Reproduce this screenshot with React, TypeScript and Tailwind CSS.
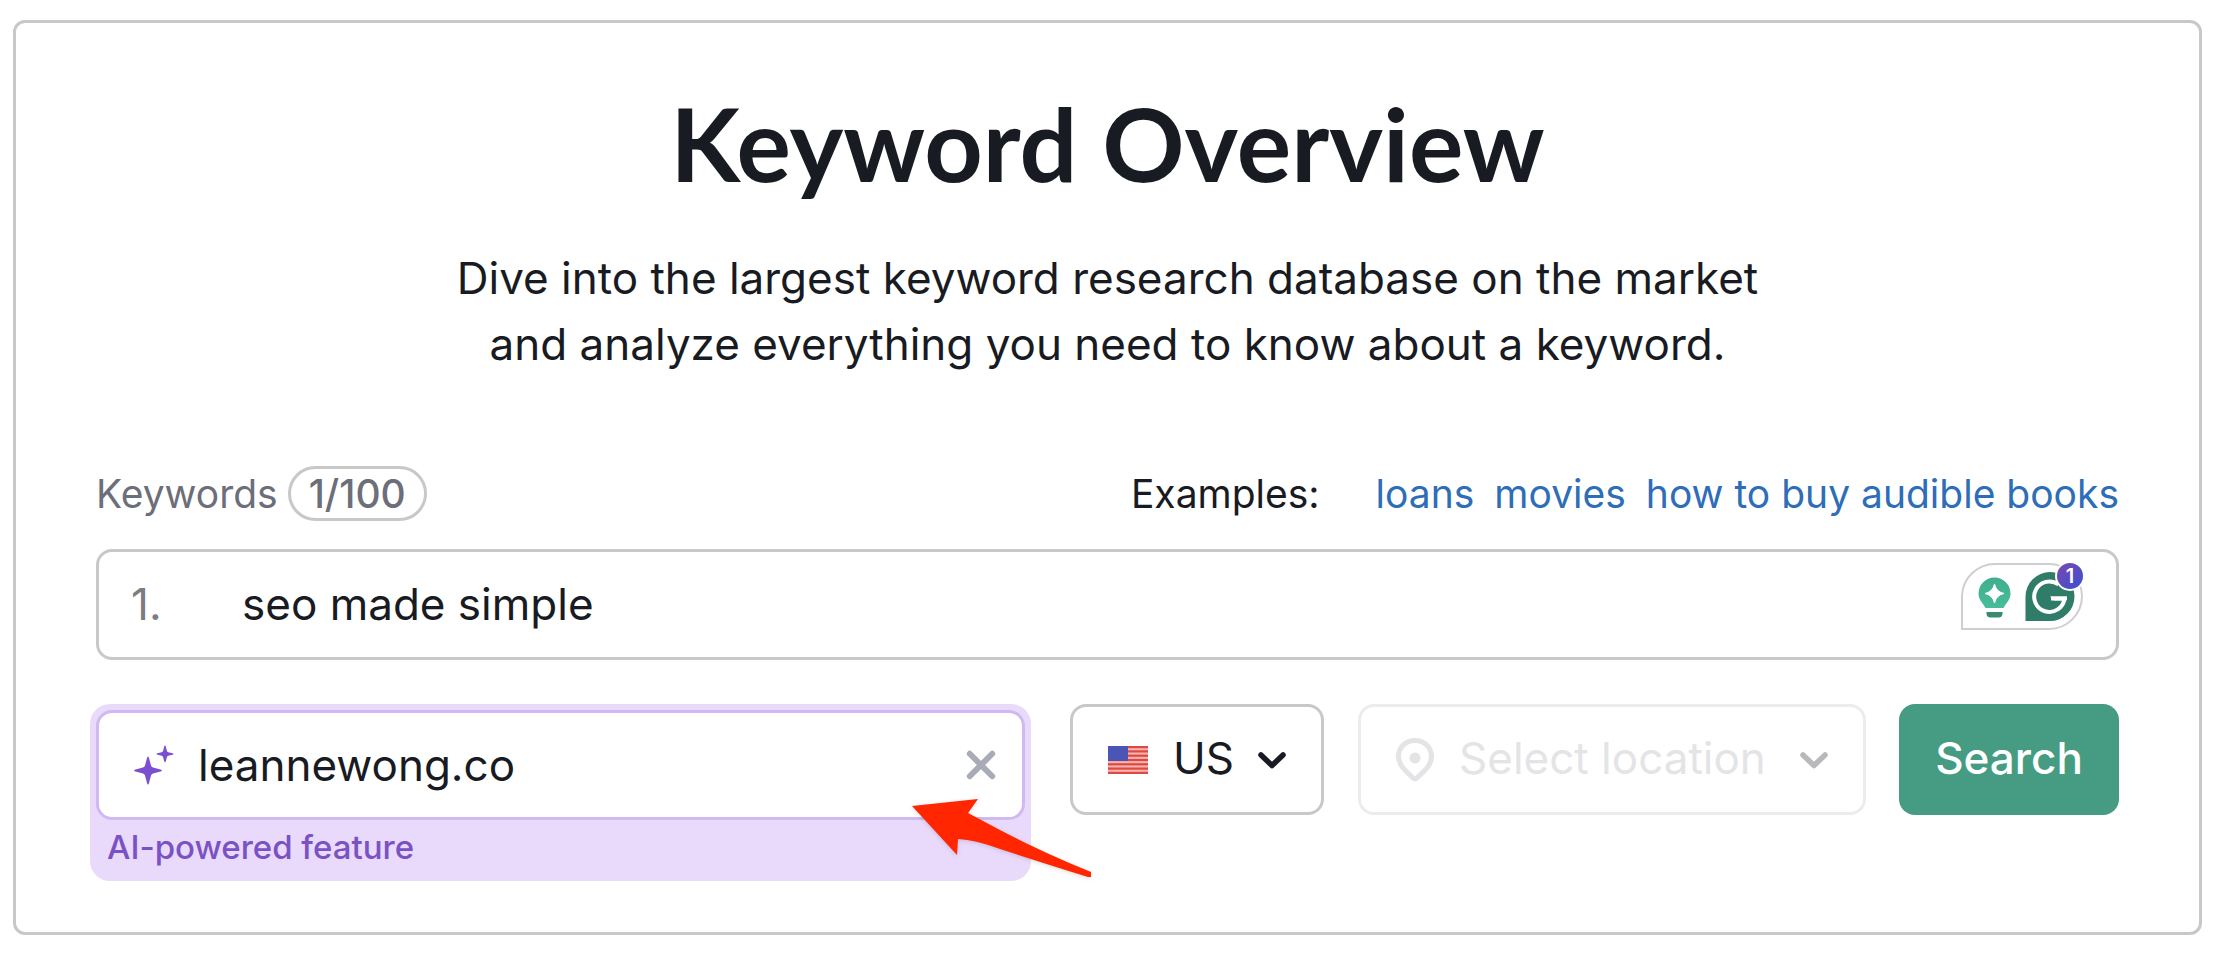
import { useState } from 'react'

const examples = ['loans', 'movies', 'how to buy audible books']

function Sparkles() {
  return (
    <svg width="40" height="40" viewBox="0 0 40 40" fill="#7a4fd0" aria-hidden="true" className="shrink-0">
      <path d="M14 11.500Q14.600 11.500 15 13L17 20.500Q17.400 22.100 19 22.500L26.500 24.500Q28 25 28 25.500Q28 26 26.500 26.500L19 28.500Q17.400 28.900 17 30.500L15 38Q14.600 39.500 14 39.500Q13.400 39.500 13 38L11 30.500Q10.600 28.900 9 28.500L1.500 26.500Q0 26 0 25.500Q0 25 1.500 24.500L9 22.500Q10.600 22.100 11 20.500L13 13Q13.400 11.500 14 11.500Z" />
      <path d="M31 .5Q31.500 .5 31.700 1.300L32.900 5.800Q33.200 6.900 34.200 7.200L38.500 8.300Q39.500 8.600 39.500 9Q39.500 9.400 38.500 9.700L34.200 10.800Q33.200 11.100 32.900 12.200L31.700 16.500Q31.500 17.300 31 17.300Q30.500 17.300 30.300 16.500L29.100 12.200Q28.800 11.100 27.800 10.800L23.500 9.700Q22.500 9.400 22.500 9Q22.500 8.600 23.500 8.300L27.800 7.200Q28.800 6.900 29.100 5.800L30.300 1.300Q30.500 .5 31 .5Z" />
    </svg>
  )
}

function CloseIcon() {
  return (
    <svg width="30" height="30" viewBox="0 0 28 28" fill="none" stroke="#a9abb6" strokeWidth="5.500" strokeLinecap="round" aria-hidden="true">
      <path d="M3.500 3.500L24.500 24.500M24.500 3.500L3.500 24.500" />
    </svg>
  )
}

function Chevron({ color }: { color: string }) {
  return (
    <svg width="28" height="18" viewBox="0 0 28 18" fill="none" stroke={color} strokeWidth="5.500" strokeLinecap="round" strokeLinejoin="round" aria-hidden="true" className="pointer-events-none shrink-0">
      <path d="M3 4L14 14.500L25 4" />
    </svg>
  )
}

function Flag() {
  return (
    <svg width="40" height="28" viewBox="0 0 39 28" preserveAspectRatio="none" aria-hidden="true" className="shrink-0">
      <rect width="39" height="28" fill="#f9b5ad" />
      {[0, 1, 2, 3, 4, 5, 6].map((i) => (
        <rect key={i} y={i * 4.3} width="39" height="2.200" fill="#dd4a44" />
      ))}
      <rect width="19.500" height="15" fill="#4a55b5" />
    </svg>
  )
}

function Pin() {
  return (
    <svg width="38" height="44" viewBox="0 0 38 44" aria-hidden="true" className="shrink-0">
      <path
        d="M19 2.500C9.500 2.500 2.500 9.500 2.500 18.500C2.500 28 11 33.500 17 40Q19 42 21 40C27 33.500 35.500 28 35.500 18.500C35.500 9.500 28.500 2.500 19 2.500Z"
        fill="none"
        stroke="#e4e4e6"
        strokeWidth="5"
      />
      <circle cx="19" cy="20" r="5.500" fill="#e4e4e6" />
    </svg>
  )
}

function WritingAssistant() {
  return (
    <div className="absolute top-[10px] right-[31px]">
      <svg width="124" height="68" viewBox="0 0 124 68" aria-hidden="true">
        <defs>
          <linearGradient id="bulb" x1="0" y1="0" x2="0" y2="1">
            <stop offset="0" stopColor="#3fae8c" />
            <stop offset="1" stopColor="#48bd9b" />
          </linearGradient>
          <linearGradient id="badge" x1="0" y1="0" x2="1" y2="1">
            <stop offset="0" stopColor="#7a48b0" />
            <stop offset="1" stopColor="#3a4fd2" />
          </linearGradient>
        </defs>
        <path d="M1 67V34A33 33 0 0 1 34 2H88A33 33 0 0 1 121 34A33 33 0 0 1 88 67Z" fill="#fff" stroke="#cfcfd3" strokeWidth="2" />
        {/* bulb */}
        <path d="M33.500 15.500A16 16 0 0 0 17.500 31.500C17.500 38 22 41 24.500 46H42.500C45 41 49.500 38 49.500 31.500A16 16 0 0 0 33.500 15.500Z" fill="url(#bulb)" />
        <path d="M33.500 22Q35.200 29.800 43 31.500Q35.200 33.200 33.500 41Q31.800 33.200 24 31.500Q31.800 29.800 33.500 22Z" fill="#fff" stroke="#fff" strokeWidth="1" strokeLinejoin="round" />
        <path d="M25.500 50H41.500V52Q41 55.500 37.500 55.500H29.500Q26 55.500 25.500 52Z" fill="#3a8a70" />
        {/* drop with the arrow ring */}
        <path d="M64.500 59V34.500A24.500 24.500 0 0 1 113.500 34.500A24.500 24.500 0 0 1 89 59Z" fill="#2f7c69" />
        <path d="M97.500 22.500A15.200 15.200 0 1 0 103.500 36.500H90" fill="none" stroke="#fff" strokeWidth="4" />
        <path d="M89 34.500H106V38L101 42V38.500H93Z" fill="#fff" />
        <circle cx="109" cy="14" r="15" fill="#fff" />
        <circle cx="109" cy="14" r="13" fill="url(#badge)" />
      </svg>
      <span className="absolute top-0 right-0 w-[30px] text-center text-[20px] leading-[28px] font-semibold text-white">1</span>
    </div>
  )
}

function Arrow() {
  return (
    <svg width="182" height="80" viewBox="0 0 182 80" aria-hidden="true" className="pointer-events-none absolute top-[95px] left-[822px] drop-shadow-sm">
      <path d="M0 7L66 0L56 14L88 31Q130 53 179 73V78H176Q125 62 88 50Q64 41 46 40L45 56Z" fill="#ff2600" />
    </svg>
  )
}

export default function App() {
  const [keyword, setKeyword] = useState('seo made simple')
  const [domain, setDomain] = useState('leannewong.co')

  return (
    <div className="bg-white pt-5 pr-[18px] pb-[19px] pl-[13px] font-[Inter,sans-serif] text-[#191b23]">
      <main className="rounded-xl border-3 border-[#c8c8c8] px-20 pt-16 pb-[51px]">
        <header className="text-center">
          <h1 className="font-[Lato,sans-serif] text-[102px] leading-[112px] font-bold">Keyword Overview</h1>
          <p className="mt-[46px] text-[44px] leading-[66px]">
            Dive into the largest keyword research database on the market
            <br />
            and analyze everything you need to know about a keyword.
          </p>
        </header>

        <form onSubmit={(e) => e.preventDefault()}>
          <div className="mt-[89px] flex items-center justify-between text-[39px] leading-[55px]">
            <label htmlFor="keyword" className="flex items-center gap-2.5 text-[#6c6e79]">
              Keywords
              <span className="rounded-full border-3 border-[#c8c8c8] px-[18px] leading-[49px] font-medium">1/100</span>
            </label>
            <div className="flex gap-5">
              <span className="mr-9">Examples:</span>
              {examples.map((example) => (
                <a key={example} href="#" className="text-[#2e6db8]">
                  {example}
                </a>
              ))}
            </div>
          </div>

          <div className="relative mt-7 flex h-[111px] items-center rounded-2xl border-3 border-[#c8c8c8] pb-0.5 pl-8 text-[44px]">
            <span className="w-[111px] text-[#7b7c84]">1.</span>
            <input
              id="keyword"
              value={keyword}
              onChange={(e) => setKeyword(e.target.value)}
              className="min-w-0 flex-1 outline-none"
            />
            <WritingAssistant />
          </div>

          <div className="relative mt-11 -ml-1.5 flex items-start text-[44px]">
            <div className="mr-[39px] h-[177px] flex-1 rounded-[20px] bg-[#e9dafc] p-1.5">
              <div className="flex h-[110px] items-center rounded-2xl border-3 border-[#cfb9f0] bg-white pr-[26px] pl-[35px]">
                <Sparkles />
                <input
                  aria-label="Domain"
                  value={domain}
                  onChange={(e) => setDomain(e.target.value)}
                  className="ml-6 min-w-0 flex-1 outline-none"
                />
                <button type="button" aria-label="Clear" onClick={() => setDomain('')}>
                  <CloseIcon />
                </button>
              </div>
              <p className="pl-[11px] text-[33px] leading-[54px] font-medium text-[#7a52c4]">AI-powered feature</p>
            </div>

            <div className="mr-[34px] flex h-[111px] w-[254px] items-center rounded-2xl border-3 border-[#c8c8c8] pl-[35px]">
              <Flag />
              <select aria-label="Country" className="ml-[25px] w-[85px] appearance-none pb-1 outline-none">
                <option>US</option>
              </select>
              <Chevron color="#191b23" />
            </div>

            <div className="mr-[33px] flex h-[111px] w-[508px] items-center rounded-2xl border-3 border-[#ececee] pl-[35px]">
              <Pin />
              <select aria-label="Location" disabled className="ml-[25px] w-[341px] appearance-none pb-1 text-[#e4e4e6] opacity-100">
                <option>Select location</option>
              </select>
              <Chevron color="#b9b9bc" />
            </div>

            <button type="submit" className="h-[111px] w-[220px] rounded-2xl bg-[#459c82] pb-1 font-medium text-white">
              Search
            </button>
            <Arrow />
          </div>
        </form>
      </main>
    </div>
  )
}
